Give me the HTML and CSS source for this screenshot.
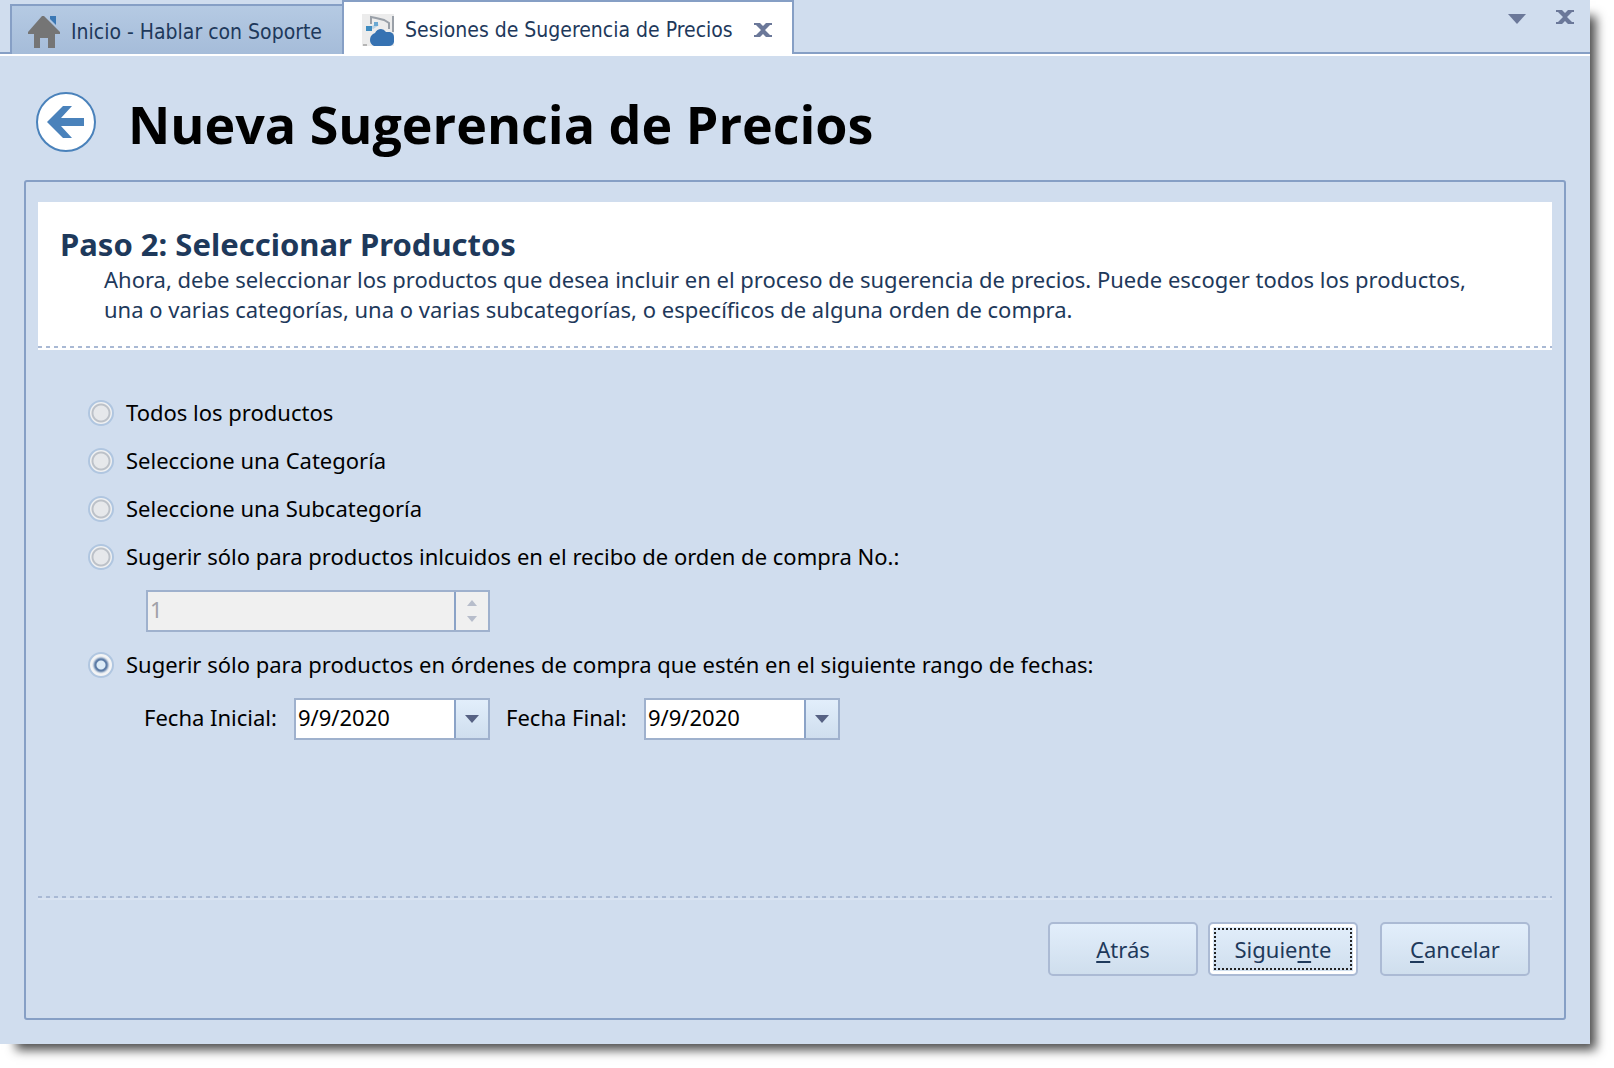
FILE: index.html
```html
<!DOCTYPE html>
<html lang="es">
<head>
    <meta charset="UTF-8">
    <meta name="viewport" content="width=device-width, initial-scale=1.0">
    <title>Sesiones de Sugerencia de Precios</title>
    <link rel="stylesheet" href="styles.css">
</head>
<body>
    <div class="window">
        <div class="tab-bar">
            <div class="tab">
                <svg class="tab-icon" viewBox="0 0 32 32">
                    <path d="M22 0h6v9l-6-6z" fill="#3b78b5"/>
                    <path d="M16 0L32 16v2h-5v14h-7V22h-8v10H6V18H0v-2L14 0z" fill="#757575"/>
                </svg>
                <span>Inicio - Hablar con Soporte</span>
            </div>
            <div class="tab active">
                <svg class="tab-icon" viewBox="0 0 32 32">
                    <path d="M0 0h32v32H0z" fill="#ececec"/>
                    <path d="M9 10V3l5 1 8 2 5 3v6M31 2v16" fill="none" stroke="#9aa0a8" stroke-width="2"/>
                    <path d="M10 14l6-4" stroke="#b9d3e6" stroke-width="3"/>
                    <path d="M4 12h6v5H4z" fill="#3f8cc0"/>
                    <path d="M12 8h4v4h-4z" fill="#6aa8d2"/>
                    <path d="M1 31h4" stroke="#b5b5b5" stroke-width="2"/>
                    <path d="M12 32q-4-2-4-6t3-6l2-1q2-4 6-4 3 0 5 3h4q4 1 4 5v5q-1 4-5 4z" fill="#3672b2"/>
                </svg>
                <span>Sesiones de Sugerencia de Precios</span>
                <button class="icon-btn" aria-label="Cerrar pestaña">
                    <svg width="18" height="14" viewBox="0 0 18 14"><path d="M0 0h6l3 3 3-3h6v2h-2l-5 5 5 5h2v2h-6l-3-3-3 3H0v-2h2l5-5-5-5H0z" fill="#6b7899"/></svg>
                </button>
            </div>
            <div class="window-tools">
                <button class="icon-btn" aria-label="Lista de pestañas">
                    <svg width="18" height="14" viewBox="0 0 18 14"><path d="M0 4h18l-9 10z" fill="#6b7899"/></svg>
                </button>
                <button class="icon-btn" aria-label="Cerrar">
                    <svg width="18" height="14" viewBox="0 0 18 14"><path d="M0 0h6l3 3 3-3h6v2h-2l-5 5 5 5h2v2h-6l-3-3-3 3H0v-2h2l5-5-5-5H0z" fill="#6b7899"/></svg>
                </button>
            </div>
        </div>

        <div class="page-header">
            <button class="icon-btn" aria-label="Volver">
                <svg width="60" height="60" viewBox="0 0 60 60">
                    <circle cx="30" cy="30" r="29" fill="#fff" stroke="#4a82bb" stroke-width="2"/>
                    <path d="M48 26v8H25l11 12h-9L11 30l16-16h9L25 26z" fill="#4a82bb"/>
                </svg>
            </button>
            <h1>Nueva Sugerencia de Precios</h1>
        </div>

        <form class="wizard">
            <div class="step-header">
                <h2>Paso 2: Seleccionar Productos</h2>
                <p>Ahora, debe seleccionar los productos que desea incluir en el proceso de sugerencia de precios. Puede escoger todos los productos, una o varias categorías, una o varias subcategorías, o específicos de alguna orden de compra.</p>
            </div>

            <div class="options">
                <label class="option"><input type="radio" name="modo">Todos los productos</label>
                <label class="option"><input type="radio" name="modo">Seleccione una Categoría</label>
                <label class="option"><input type="radio" name="modo">Seleccione una Subcategoría</label>
                <label class="option"><input type="radio" name="modo">Sugerir sólo para productos inlcuidos en el recibo de orden de compra No.:</label>
                <div class="fields">
                    <div class="field field-wide disabled">
                        <input type="text" value="1" aria-label="Orden de compra No." disabled>
                        <div class="spinner">
                            <button type="button" aria-label="Subir" disabled><svg width="10" height="6" viewBox="0 0 10 6"><path d="M0 6l5-6 5 6z" fill="#b7bdcb"/></svg></button>
                            <button type="button" aria-label="Bajar" disabled><svg width="10" height="6" viewBox="0 0 10 6"><path d="M0 0h10L5 6z" fill="#b7bdcb"/></svg></button>
                        </div>
                    </div>
                </div>
                <label class="option"><input type="radio" name="modo" checked>Sugerir sólo para productos en órdenes de compra que estén en el siguiente rango de fechas:</label>
                <div class="fields">
                    <label class="date-label" for="fecha-inicial">Fecha Inicial:</label>
                    <div class="field">
                        <input type="text" id="fecha-inicial" value="9/9/2020">
                        <button type="button" class="drop" aria-label="Abrir calendario"><svg width="14" height="8" viewBox="0 0 14 8"><path d="M0 0h14L7 8z" fill="#566183"/></svg></button>
                    </div>
                    <label class="date-label" for="fecha-final">Fecha Final:</label>
                    <div class="field">
                        <input type="text" id="fecha-final" value="9/9/2020">
                        <button type="button" class="drop" aria-label="Abrir calendario"><svg width="14" height="8" viewBox="0 0 14 8"><path d="M0 0h14L7 8z" fill="#566183"/></svg></button>
                    </div>
                </div>
            </div>

            <div class="actions">
                <button type="button" class="btn"><u>A</u>trás</button>
                <button type="button" class="btn btn-focus">Siguie<u>n</u>te</button>
                <button type="button" class="btn btn-cancel"><u>C</u>ancelar</button>
            </div>
        </form>
    </div>
</body>
</html>
```
FILE: styles.css
```css
* {
    box-sizing: border-box;
}
body {
    display: flex;
    min-height: 100vh;
    margin: 0;
    padding: 0 24px 24px 0;
    background: white;
    font-family: "Noto Sans", "Open Sans", sans-serif;
    font-size: 22px;
    color: #000;
}
button, input {
    font-family: inherit;
    font-size: inherit;
}
.window {
    display: flex;
    flex-direction: column;
    flex: 1;
    min-width: 0;
    background: #d0ddee;
    box-shadow: 11px 11px 10px -5px rgba(0, 0, 0, 0.7);
}

/* tabs */
.tab-bar {
    display: flex;
    align-items: flex-end;
    height: 56px;
    padding-left: 10px;
    border-bottom: 2px solid white;
    box-shadow: inset 0 -2px #869fc5;
    font-family: "DejaVu Sans Condensed", "DejaVu Sans", sans-serif;
    font-size: 21px;
    color: #1e395b;
}
.tab {
    display: flex;
    align-items: center;
    gap: 11px;
    height: 50px;
    padding: 4px 20px 0 16px;
    border: 2px solid #869fc5;
    border-width: 2px 0 0 2px;
    background: linear-gradient(#b5cae3, #a5bcd9);
}
.tab.active {
    height: 54px;
    border-width: 2px 2px 0;
    padding: 4px 20px 0 18px;
    background: white;
}
.tab-icon {
    width: 32px;
    height: 32px;
}
.icon-btn {
    display: flex;
    padding: 0;
    border: none;
    background: none;
    cursor: pointer;
}
.tab .icon-btn {
    margin-left: 10px;
}
.window-tools {
    display: flex;
    gap: 30px;
    align-self: flex-start;
    margin-left: auto;
    padding: 10px 16px 0 0;
}

/* title */
.page-header {
    display: flex;
    align-items: center;
    gap: 32px;
    padding: 28px 36px 20px;
}
h1 {
    margin: 0;
    padding-top: 4px;
    font-family: "Open Sans", "Noto Sans", sans-serif;
    font-size: 52px;
    line-height: 72px;
    font-weight: bold;
}

/* wizard panel */
.wizard {
    display: flex;
    flex-direction: column;
    flex: 1;
    margin: 0 24px 24px;
    padding: 20px 12px 42px;
    border: 2px solid #869fc5;
    border-radius: 3px;
}
.step-header {
    position: relative;
    padding: 24px 22px 26px;
    background: white;
    color: #1e395b;
}
.step-header::after,
.actions::before {
    content: "";
    position: absolute;
    left: 0;
    right: 0;
    height: 2px;
    background: repeating-linear-gradient(90deg, #a9b9d4 0 4px, transparent 4px 8px);
}
.step-header::after {
    bottom: 2px;
}
h2 {
    margin: 0 0 2px;
    font-size: 31px;
    line-height: 36px;
}
.step-header p {
    margin: 0;
    padding: 0 22px 0 44px;
    line-height: 30px;
}
.options {
    display: flex;
    flex-direction: column;
    flex: 1;
    padding: 38px 50px;
}
.option {
    display: flex;
    align-items: center;
    gap: 12px;
    line-height: 48px;
}
.option input {
    flex: none;
    width: 26px;
    height: 26px;
    margin: 2px 0 0;
    appearance: none;
    border: 2px solid #b0c6e0;
    border-radius: 50%;
    background: radial-gradient(circle, #e6e8eb 0 7px, #bcc1c8 8px 9px, #f0f1f2 10px);
}
.option input:checked {
    background: radial-gradient(circle, #dcebf7 0 4px, #5d7ca6 5px 6px, #d4dde8 8px, #f3f4f5 9px);
}
.fields {
    display: flex;
    align-items: center;
    margin-left: 56px;
    padding: 10px 0 8px;
}
.date-label {
    width: 150px;
    padding-bottom: 4px;
}
.date-label:not(:first-child) {
    width: 138px;
    margin-left: 16px;
}
.field {
    display: flex;
    width: 196px;
    height: 42px;
    border: 2px solid #9fb1cd;
    background: white;
}
.field-wide {
    width: 344px;
    margin-left: 2px;
}
.field input {
    flex: 1;
    min-width: 0;
    padding: 0 2px 4px;
    border: none;
    outline: none;
    background: none;
}
.field.disabled {
    background: #f0f0f0;
}
.field.disabled input {
    color: #a0a0a8;
}
.drop,
.spinner {
    display: flex;
    align-items: center;
    justify-content: center;
    width: 34px;
    padding: 0;
    border: none;
    border-left: 2px solid #8ba3c7;
}
.drop {
    background: linear-gradient(#e2eefb, #cfdeee);
}
.spinner {
    flex-direction: column;
    gap: 10px;
}
.spinner button {
    display: flex;
    padding: 0;
    border: none;
    background: none;
}

/* buttons */
.actions {
    position: relative;
    display: flex;
    justify-content: flex-end;
    gap: 10px;
    padding: 26px 22px 0;
}
.actions::before {
    top: 0;
    box-shadow: 0 2px rgba(255, 255, 255, 0.2);
}
.btn {
    width: 150px;
    height: 54px;
    padding: 0;
    border: 2px solid #abbad4;
    border-radius: 5px;
    background: linear-gradient(#e2eefb, #cfdeed);
    color: #1e395b;
    cursor: pointer;
}
.btn u {
    text-underline-offset: 3px;
}
.btn-focus {
    box-shadow: inset 0 0 0 3px white;
    outline: 2px dotted #222;
    outline-offset: -8px;
}
.btn-cancel {
    margin-left: 12px;
}
```
